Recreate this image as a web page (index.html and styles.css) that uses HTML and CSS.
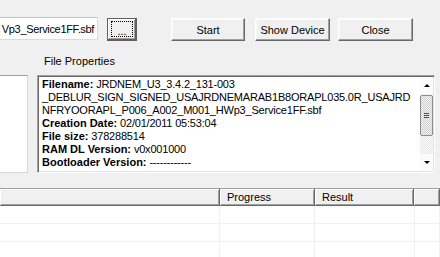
FILE: index.html
```html
<!DOCTYPE html>
<html lang="en">
<head>
  <meta charset="UTF-8">
  <title>Flash Tool</title>
  <link rel="stylesheet" href="styles.css">
</head>
<body>
  <div class="window">
    <div class="top-row">
      <div class="file-input">Vp3_Service1FF.sbf</div>
      <button class="btn btn-browse"><span class="focus-rect">...</span></button>
      <button class="btn btn-start">Start</button>
      <button class="btn btn-show">Show Device</button>
      <button class="btn btn-close">Close</button>
    </div>

    <div class="props-label">File Properties</div>

    <div class="mid-row">
      <div class="side-box"></div>
      <div class="props-box">
        <div class="props-text">
          <div><b>Filename:</b> JRDNEM_U3_3.4.2_131-003</div>
          <div>_DEBLUR_SIGN_SIGNED_USAJRDNEMARAB1B8ORAPL035.0R_USAJRD</div>
          <div>NFRYOORAPL_P006_A002_M001_HWp3_Service1FF.sbf</div>
          <div><b>Creation Date:</b> 02/01/2011 05:53:04</div>
          <div><b>File size:</b> 378288514</div>
          <div><b>RAM DL Version:</b> v0x001000</div>
          <div><b>Bootloader Version:</b> ------------</div>
        </div>
        <div class="vscroll">
          <div class="arrow-btn"><span class="arrow up"></span></div>
          <div class="thumb"><span class="grip"></span></div>
          <div class="track"></div>
          <div class="arrow-btn"><span class="arrow down"></span></div>
        </div>
      </div>
    </div>

    <div class="list">
      <div class="list-head">
        <div class="col-head"></div>
        <div class="col-head">Progress</div>
        <div class="col-head">Result</div>
        <div class="col-head"></div>
      </div>
      <div class="list-row"><div></div><div></div><div></div><div></div></div>
      <div class="list-row"><div></div><div></div><div></div><div></div></div>
      <div class="list-row"><div></div><div></div><div></div><div></div></div>
    </div>
  </div>
</body>
</html>
```

FILE: styles.css
```css
body {
  margin: 0;
  background: #f0f0f0;
  font-family: "Liberation Sans", Arial, sans-serif;
  font-size: 11px;
  color: #000;
  overflow: hidden;
}
.window {
  width: 440px;
  height: 257px;
  overflow: hidden;
}

/* top row: file path + buttons */
.top-row {
  display: flex;
  align-items: flex-start;
  padding-top: 17px;
  height: 24px;
}
.file-input {
  box-sizing: border-box;
  width: 98px;
  height: 23px;
  background: #fff;
  border: 1px solid #dcdcdc;
  border-top-color: #c4c4c4;
  border-left: none;
  padding-right: 3px;
  display: flex;
  justify-content: flex-end;
  align-items: center;
  white-space: nowrap;
  letter-spacing: -0.35px;
}
.btn {
  box-sizing: border-box;
  height: 23px;
  margin-top: 1px;
  padding: 0;
  background: #f0f0f0;
  border: 1px solid;
  border-color: #fff #696969 #696969 #fff;
  box-shadow: inset -1px -1px #a0a0a0, inset 1px 1px #f8f8f8;
  font-family: "Liberation Sans", Arial, sans-serif;
  font-size: 11px;
  color: #000;
}
.btn-browse {
  width: 30px;
  margin-left: 9px;
  border: 1px solid #5f5f5f;
  border-right-width: 2px;
  border-bottom-width: 2px;
  box-shadow: inset 1px 1px #fff, inset -1px -1px #a0a0a0;
  position: relative;
}
.focus-rect {
  position: absolute;
  left: 3px;
  top: 2px;
  right: 2px;
  bottom: 2px;
  border: 1px dotted #000;
  display: flex;
  align-items: flex-end;
  justify-content: center;
  line-height: 10px;
}
.btn-start { width: 74px; margin-left: 34px; }
.btn-show { width: 75px; margin-left: 10px; }
.btn-close { width: 75px; margin-left: 8px; }

.props-label {
  margin: 14px 0 7px 44px;
  line-height: 13px;
}

/* middle: side list + properties box */
.mid-row {
  display: flex;
  height: 98px;
}
.side-box {
  box-sizing: border-box;
  width: 28px;
  background: #fff;
  border-top: 1px solid #a0a0a0;
  border-right: 1px solid #d8d8d8;
  border-bottom: 1px solid #d8d8d8;
}
.props-box {
  box-sizing: border-box;
  width: 398px;
  margin-left: 9px;
  background: #fff;
  border: 1px solid;
  border-color: #a0a0a0 #fff #fff #a0a0a0;
  box-shadow: inset 1px 1px #696969, inset -1px -1px #e3e3e3;
  padding: 1px;
  display: flex;
}
.props-text {
  flex: 1;
  padding: 1px 3px 0 3px;
  line-height: 13px;
  white-space: nowrap;
  overflow: hidden;
  letter-spacing: -0.2px;
}
.props-text b {
  font-weight: 700;
  letter-spacing: 0;
}
.vscroll {
  width: 13px;
  display: flex;
  flex-direction: column;
  background: repeating-conic-gradient(#e4e4e4 0 25%, #fff 0 50%) 0 0 / 2px 2px;
}
.arrow-btn {
  height: 17px;
  display: flex;
  align-items: center;
  justify-content: center;
  background: #fbfbfb;
}
.arrow {
  width: 0;
  height: 0;
  border-left: 3px solid transparent;
  border-right: 3px solid transparent;
}
.arrow.up { border-bottom: 3px solid #000; }
.arrow.down { border-top: 3px solid #000; }
.thumb {
  box-sizing: border-box;
  height: 41px;
  margin-top: 1px;
  border: 1px solid #8c8c8c;
  border-radius: 2px;
  background: repeating-conic-gradient(#cfcfcf 0 25%, #f4f4f4 0 50%) 0 0 / 2px 2px;
  display: flex;
  align-items: center;
  justify-content: center;
}
.grip {
  width: 5px;
  height: 5px;
  background: repeating-linear-gradient(#555 0 1px, transparent 1px 2px);
}
.track {
  flex: 1;
}

/* bottom list view */
.list {
  margin-top: 15px;
}
.list-head {
  display: grid;
  grid-template-columns: 220px 95px 99px 1fr;
  height: 18px;
}
.col-head {
  box-sizing: border-box;
  background: #f0f0f0;
  border-top: 1px solid #a0a0a0;
  border-right: 1px solid #696969;
  border-bottom: 1px solid #696969;
  box-shadow: inset 1px 1px #fff, inset -1px -1px #a0a0a0;
  padding-left: 7px;
  line-height: 16px;
}
.list-row {
  display: grid;
  grid-template-columns: 220px 95px 100px 1fr;
  height: 18px;
  background: #fff;
}
.list-row div {
  border-right: 1px solid #f0f0f0;
  border-bottom: 1px solid #f0f0f0;
}
```
